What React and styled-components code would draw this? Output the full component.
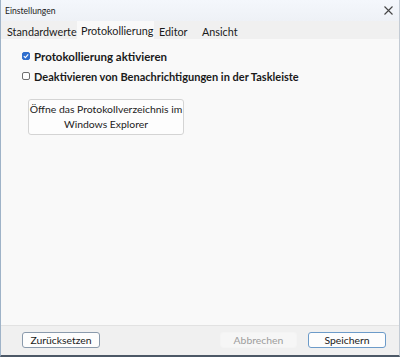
import React from 'react';
import styled, { createGlobalStyle } from 'styled-components';

const GlobalStyle = createGlobalStyle`
    html, body {
        margin: 0;
        padding: 0;
        background: #dfe4ea;
    }
    body {
        font-family: Lato, 'Open Sans', sans-serif;
    }
`;

const Window = styled.div`
    width: 400px;
    height: 357px;
    box-sizing: border-box;
    display: flex;
    flex-direction: column;
    border-left: 1px solid #9fb3c8;
    border-right: 1px solid #c3cbd4;
    border-bottom: 2px solid #4c5866;
    background: #f0f0f0;
    overflow: hidden;
    white-space: nowrap;
`;

const TitleBar = styled.div`
    height: 21px;
    display: flex;
    align-items: center;
    justify-content: space-between;
    padding: 0 6px 0 4px;
    background: linear-gradient(#f4f7fc, #eef1f6);
    font-size: 8.6px;
    color: #222;
`;

const Close = styled.svg`
    width: 9px;
    height: 9px;
    stroke: #444;
    stroke-width: 1.1;
`;

const TabStrip = styled.div`
    display: flex;
    align-items: flex-end;
    height: 18px;
    padding-left: 2px;
    background: #f0f0f0;
`;

const Tab = styled.div`
    width: ${(p) => p.w}px;
    height: ${(p) => (p.active ? '18px' : '16px')};
    display: flex;
    align-items: center;
    padding-left: ${(p) => p.pl}px;
    font-size: 10.8px;
    color: #1a1a1a;
    background: ${(p) => (p.active ? '#f9f9f9' : '#f0f0f0')};
    box-sizing: border-box;
`;

const Panel = styled.div`
    flex: 1;
    background: #f9f9f9;
    border-bottom: 1px solid #e2e2e2;
    padding: 10px 0 0 21px;
    display: flex;
    flex-direction: column;
    align-items: flex-start;
`;

const CheckRow = styled.label`
    display: flex;
    align-items: center;
    gap: 4px;
    font-size: ${(p) => p.size || 11.2}px;
    font-weight: 700;
    color: #1a1a1a;
    height: 14px;
    margin-bottom: 6px;
`;

const Box = styled.span`
    width: 8px;
    height: 8px;
    border-radius: 2px;
    box-sizing: border-box;
    display: inline-flex;
    align-items: center;
    justify-content: center;
    background: ${(p) => (p.checked ? '#2f6fce' : '#fff')};
    border: 1px solid ${(p) => (p.checked ? '#2f6fce' : '#6f6f6f')};
`;

const OpenButton = styled.div`
    margin: 10px 0 0 6px;
    width: 156px;
    height: 36px;
    box-sizing: border-box;
    border: 1px solid #d4d4d4;
    border-radius: 3px;
    background: #fdfdfd;
    display: flex;
    flex-direction: column;
    align-items: center;
    justify-content: center;
    font-size: 10.4px;
    line-height: 15px;
    color: #222;
    text-align: center;
`;

const Footer = styled.div`
    height: 28px;
    display: flex;
    align-items: center;
    padding: 0 13px 1px 21px;
    background: #f0f0f0;
`;

const Button = styled.div`
    width: ${(p) => p.w || 77}px;
    height: 16px;
    box-sizing: border-box;
    border: 1px solid ${(p) => (p.disabled ? '#f4f4f4' : p.primary ? '#6c9bc9' : '#8a9aac')};
    border-radius: 3px;
    background: ${(p) => (p.disabled ? '#f6f6f6' : '#fdfdfd')};
    color: ${(p) => (p.disabled ? '#9d9d9d' : '#1a1a1a')};
    font-size: 10.4px;
    display: flex;
    align-items: center;
    justify-content: center;
    margin-left: ${(p) => p.ml || 0}px;
`;

const Spacer = styled.div`
    flex: 1;
`;

function Check({ checked, size, children }) {
    return (
        <CheckRow size={size}>
            <Box checked={checked}>
                {checked && (
                    <svg width="6" height="6" viewBox="0 0 6 6">
                        <path d="M0.8 3.1 L2.4 4.6 L5.2 1.4" fill="none" stroke="#fff" strokeWidth="1.1" />
                    </svg>
                )}
            </Box>
            {children}
        </CheckRow>
    );
}

export default function App() {
    return (
        <>
            <GlobalStyle />
            <Window>
                <TitleBar>
                    <span>Einstellungen</span>
                    <Close viewBox="0 0 9 9">
                        <path d="M0.5 0.5 L8.5 8.5 M8.5 0.5 L0.5 8.5" />
                    </Close>
                </TitleBar>
                <TabStrip>
                    <Tab w={74} pl={4}>Standardwerte</Tab>
                    <Tab active w={77} pl={4}>Protokollierung</Tab>
                    <Tab w={43} pl={5}>Editor</Tab>
                    <Tab w={43} pl={5}>Ansicht</Tab>
                </TabStrip>
                <Panel>
                    <Check checked size={11.5}>Protokollierung aktivieren</Check>
                    <Check size={11}>Deaktivieren von Benachrichtigungen in der Taskleiste</Check>
                    <OpenButton>
                        <span>Öffne das Protokollverzeichnis im</span>
                        <span>Windows Explorer</span>
                    </OpenButton>
                </Panel>
                <Footer>
                    <Button w={78}>Zurücksetzen</Button>
                    <Spacer />
                    <Button disabled w={77}>Abbrechen</Button>
                    <Button primary w={78} ml={11}>Speichern</Button>
                </Footer>
            </Window>
        </>
    );
}
